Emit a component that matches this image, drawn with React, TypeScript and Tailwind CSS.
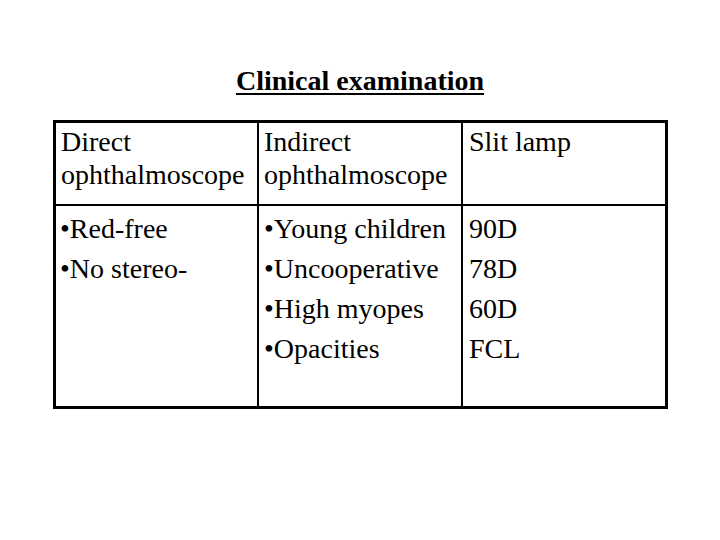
export default function App() {
  return (
    <div className="w-[720px] h-[540px] bg-white text-black overflow-hidden font-['Liberation_Serif','Times_New_Roman','DejaVu_Serif',serif]">
      <div className="pt-[65px] flex justify-center">
        <h1 className="text-[28px] leading-[32px] font-bold underline underline-offset-[3px] decoration-2">
          Clinical examination
        </h1>
      </div>
      <div className="mt-[23px] ml-[53px] w-[615px] border-[3px] border-black text-[28px]">
        <div className="grid grid-cols-[201px_204px_204px] h-[81px] leading-[33px]">
          <div className="pl-[5px] pt-[2px]">
            <div>Direct</div>
            <div>ophthalmoscope</div>
          </div>
          <div className="border-l-2 border-black pl-[5px] pt-[2px]">
            <div>Indirect</div>
            <div>ophthalmoscope</div>
          </div>
          <div className="border-l-2 border-black pl-[6px] pt-[2px]">
            <div>Slit lamp</div>
          </div>
        </div>
        <div className="grid grid-cols-[201px_204px_204px] h-[202px] border-t-2 border-black leading-[40px]">
          <div className="pl-[4px] pt-[3px]">
            <div>•Red-free</div>
            <div>•No stereo-</div>
          </div>
          <div className="border-l-2 border-black pl-[5px] pt-[3px]">
            <div>•Young children</div>
            <div>•Uncooperative</div>
            <div>•High myopes</div>
            <div>•Opacities</div>
          </div>
          <div className="border-l-2 border-black pl-[6px] pt-[3px]">
            <div>90D</div>
            <div>78D</div>
            <div>60D</div>
            <div>FCL</div>
          </div>
        </div>
      </div>
    </div>
  );
}
